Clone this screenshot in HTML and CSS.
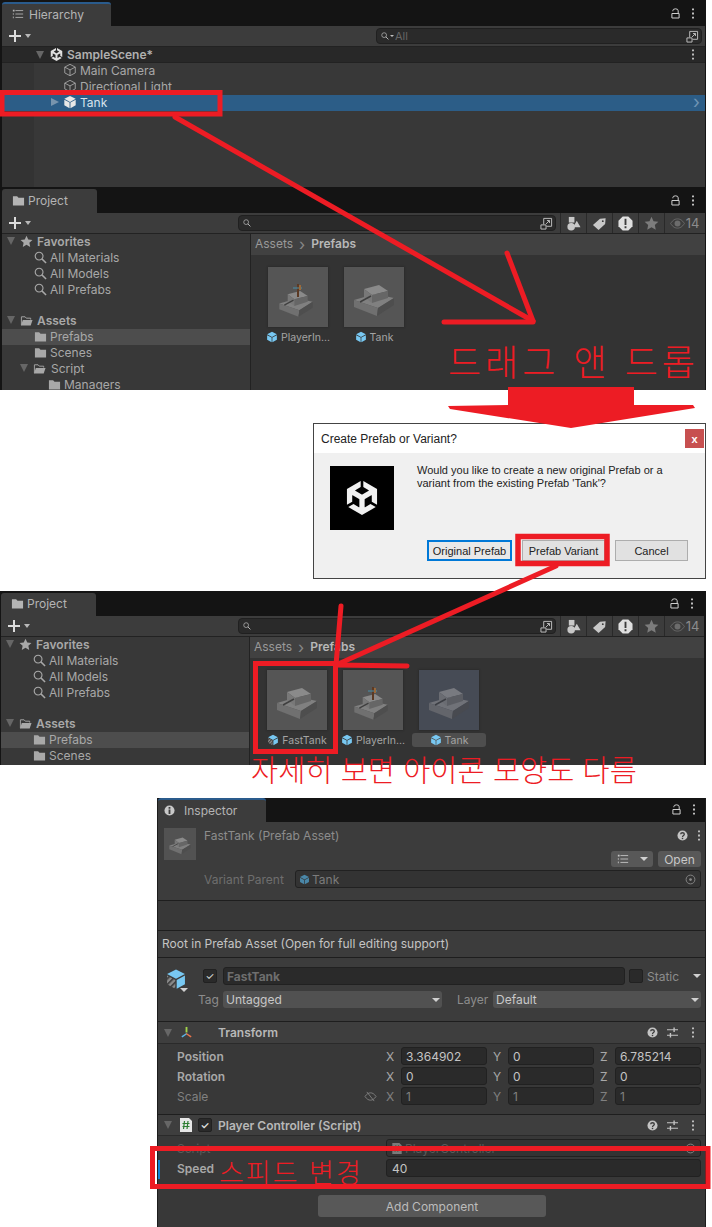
FILE: index.html
```html
<!DOCTYPE html>
<html lang="ko">
<head>
    <meta charset="UTF-8">
    <meta name="viewport" content="width=device-width, initial-scale=1.0">
    <title>Prefab Variant</title>
    <link rel="stylesheet" href="styles.css">
</head>
<body>
    <svg class="sprite" width="0" height="0">
        <defs>
            <pattern id="stripes" width="3" height="3" patternUnits="userSpaceOnUse" patternTransform="rotate(45)">
                <rect width="3" height="3" fill="#8a8a8a"/>
                <rect width="1.4" height="3" fill="#444"/>
            </pattern>
        </defs>
        <symbol id="unity" viewBox="0 0 24 24">
            <path d="m12.9288 4.2939 3.7997 2.1929c.1366.077.1415.2905 0 .3675l-4.515 2.6076a.4192.4192 0 0 1-.4246 0L7.2739 6.8543c-.1416-.0795-.1416-.2905 0-.3675l3.7972-2.193V0L1.3758 5.5977V16.793l3.7177-2.1456v-4.3858c-.0025-.1565.1727-.2676.3193-.1838l4.5176 2.6077a.4168.4168 0 0 1 .2123.3674v5.2127c.0024.1565-.1753.2675-.3194.1838l-3.7996-2.1929-3.7178 2.1457L12 24l9.6954-5.5977-3.7178-2.1457-3.7996 2.1929c-.1416.0838-.3218-.0248-.3193-.1838V13.053c0-.1565.0901-.2976.2123-.3674l4.5151-2.6077c.1442-.0838.3219.0248.3194.1838v4.3858l3.7177 2.1456V5.5977L12.9288 0Z" fill="currentColor"/>
        </symbol>
        <symbol id="plus" viewBox="0 0 12 12">
            <path d="M5 0h2v5h5v2H7v5H5V7H0V5h5z" fill="currentColor"/>
        </symbol>
        <symbol id="cube" viewBox="0 0 16 16">
            <path d="M8 1l6.5 3.4L8 7.9 1.500 4.400z M1.500 5.500l6 3.200V15l-6-3.200z M8.500 8.700l6-3.200v6.300l-6 3.200z" fill="currentColor"/>
        </symbol>
        <symbol id="cube-line" viewBox="0 0 16 16">
            <path d="M8 1.500l6 3.200v6.600l-6 3.200-6-3.200V4.700z M2 4.700l6 3.200 6-3.200 M8 7.900v6.600" fill="none" stroke="currentColor" stroke-width="1"/>
        </symbol>
        <symbol id="cube-variant" viewBox="0 0 16 16">
            <path d="M8 1l6.5 3.400L8 7.900 1.500 4.400z M8.500 8.700l6-3.200v6.300l-6 3.200z" fill="#78c8f2"/>
            <path d="M1.500 5.500l6 3.200V15l-6-3.200z" fill="url(#stripes)"/>
        </symbol>
        <symbol id="folder" viewBox="0 0 14 14">
            <path d="M1 2.500h4.500L7 4h6v8.500H1z" fill="currentColor"/>
        </symbol>
        <symbol id="folder-open" viewBox="0 0 14 14">
            <path d="M1.500 12V3h4l1.300 1.500h4.700V6" fill="none" stroke="currentColor"/>
            <path d="M3 6.500h10.500L11.500 12.500H1z" fill="currentColor"/>
        </symbol>
        <symbol id="search" viewBox="0 0 14 14">
            <circle cx="5.500" cy="5.500" r="4.200" fill="none" stroke="currentColor" stroke-width="1.200"/>
            <path d="M8.500 8.500l4.500 4.500" stroke="currentColor" stroke-width="1.600"/>
        </symbol>
        <symbol id="star" viewBox="0 0 14 14">
            <path d="M7 .8l1.900 4.100 4.500.5-3.300 3 .9 4.400L7 10.600l-4 2.200.9-4.400-3.300-3 4.500-.5z" fill="currentColor"/>
        </symbol>
        <symbol id="lock" viewBox="0 0 10 12">
            <path d="M1 6h8v5H1z M2 3.500V3a3 2.200 0 0 1 6 0v3" fill="none" stroke="currentColor" stroke-width="1.100"/>
        </symbol>
        <symbol id="dots" viewBox="0 0 4 12">
            <path d="M1 .5h2v2H1z M1 5h2v2H1z M1 9.500h2v2H1z" fill="currentColor"/>
        </symbol>
        <symbol id="list" viewBox="0 0 14 12">
            <path d="M4 2h9 M4 6h9 M4 10h9" stroke="currentColor" fill="none"/>
            <path d="M1 1h2v2H1z M1 5h1v2H1z M1 9h1v2H1z" fill="currentColor"/>
        </symbol>
        <symbol id="link" viewBox="0 0 14 14">
            <path d="M4 8V1.500h8.500V10H7 M1 8.500h5.500V13H1z M6.500 7.500L10 4 M7.500 3.800H10.200V6.500" fill="none" stroke="currentColor"/>
        </symbol>
        <symbol id="shapes" viewBox="0 0 16 16">
            <path d="M3 1h6v6H3z" fill="currentColor"/>
            <circle cx="5.500" cy="11.500" r="4" fill="currentColor"/>
            <path d="M11.500 5l4 7h-8z" fill="currentColor"/>
        </symbol>
        <symbol id="tag" viewBox="0 0 16 16">
            <path d="M1 9.500L8.500 3l6-.5-.5 6L7 15z" fill="currentColor"/>
            <circle cx="11.500" cy="5.500" r="1" fill="#3c3c3c"/>
        </symbol>
        <symbol id="alert" viewBox="0 0 16 16">
            <path d="M5 .5h6L15.500 5v6L11 15.500H5L.5 11V5z" fill="currentColor"/>
            <path d="M7 3h2v6.500H7z M7 11h2v2H7z" fill="#3c3c3c"/>
        </symbol>
        <symbol id="eye" viewBox="0 0 16 12">
            <path d="M.5 6C3 2 5.500 1 8 1s5 1 7.500 5c-2.500 4-5 5-7.500 5S3 10 .5 6z" fill="none" stroke="currentColor"/>
            <circle cx="8" cy="6" r="3.200" fill="currentColor"/>
        </symbol>
        <symbol id="eye-off" viewBox="0 0 14 12">
            <path d="M1 6c2-3 4-4 6-4s4 1 6 4c-2 3-4 4-6 4S3 9 1 6z M3 1l8 10" fill="none" stroke="currentColor"/>
        </symbol>
        <symbol id="info" viewBox="0 0 12 12">
            <circle cx="6" cy="6" r="5.500" fill="currentColor"/>
            <path d="M5 2.300h2v1.700H5z M5 5h2v4.700H5z" fill="#3c3c3c"/>
        </symbol>
        <symbol id="help" viewBox="0 0 12 12">
            <circle cx="6" cy="6" r="5.500" fill="currentColor"/>
            <path d="M4 4.500C4 2.500 8 2.500 8 4.500 8 6 6 5.800 6 7.500" fill="none" stroke="#3c3c3c" stroke-width="1.400"/>
            <path d="M5.200 8.500h1.600V10H5.200z" fill="#3c3c3c"/>
        </symbol>
        <symbol id="sliders" viewBox="0 0 12 12">
            <path d="M0 3h12 M0 9h12" stroke="currentColor" stroke-width="1.300"/>
            <path d="M7 .5h1.500v5H7z M3 6.500h1.500v5H3z" fill="currentColor"/>
        </symbol>
        <symbol id="target" viewBox="0 0 12 12">
            <circle cx="6" cy="6" r="4.800" fill="none" stroke="currentColor"/>
            <circle cx="6" cy="6" r="1.500" fill="currentColor"/>
        </symbol>
        <symbol id="axes" viewBox="0 0 14 14">
            <path d="M6 1h2v6H6z" fill="#a3d44b"/>
            <path d="M7 7.500L1.500 11l1 1.500L7.500 9z" fill="#5ab4e6"/>
            <path d="M7 7.500l5.500 3.500-1 1.500L6.500 9z" fill="#e8734a"/>
        </symbol>
        <symbol id="script" viewBox="0 0 12 14">
            <path d="M0 0h9l3 3v11H0z" fill="#e6e6e6"/>
            <path d="M4.500 3L3.500 11 M8 3L7 11 M2.500 5.500h7 M2.500 8.500h7" stroke="#2e7d32" stroke-width="1.200"/>
        </symbol>
        <symbol id="tank" viewBox="0 0 60 60">
            <path d="M10 33l21-6 19 4-16 10z" fill="#808080"/>
            <path d="M10 33l24 8-1 8-23-9z" fill="#707070"/>
            <path d="M34 41l16-10v7L33 49z" fill="#4e4e4e"/>
            <path d="M20 22l15-4 9 6-16 4z" fill="#8a8a8a"/>
            <path d="M20 22l8 6v8l-8-6z" fill="#787878"/>
            <path d="M28 28l16-4v7l-16 5z" fill="#666"/>
            <path d="M16 35l11-6" stroke="#3f3f3f" stroke-width="1.500"/>
        </symbol>
        <symbol id="tank-player" viewBox="0 0 60 60">
            <use href="#tank" x="3" y="9" width="50" height="50"/>
            <path d="M30 17v13" stroke="#5c3a24" stroke-width="2"/>
            <path d="M25 21h9" stroke="#4a8fa8" stroke-width="1"/>
            <path d="M31 18h2v5h-2z" fill="#9a6a3c"/>
        </symbol>
    </svg>

    <div class="shot shot-top">
        <section class="panel panel-hierarchy">
            <div class="tabbar">
                <div class="tab tab-focus"><svg class="ico-12"><use href="#list"/></svg>Hierarchy</div>
                <div class="tabbar-tools">
                    <svg class="ico-lock"><use href="#lock"/></svg>
                    <svg class="ico-dots"><use href="#dots"/></svg>
                </div>
            </div>
            <div class="toolbar">
                <svg class="plus"><use href="#plus"/></svg><span class="caret"></span>
                <div class="search search-wide">
                    <svg class="ico-8"><use href="#search"/></svg><span class="caret-mini"></span>
                    <span class="search-text">All</span>
                    <svg class="ico-link"><use href="#link"/></svg>
                </div>
            </div>
            <div class="scene-row">
                <span class="arrow-down arrow-scene"></span>
                <svg class="ico-scene"><use href="#unity"/></svg>
                <span class="bold">SampleScene*</span>
                <svg class="ico-dots ico-dots-end"><use href="#dots"/></svg>
            </div>
            <div class="tree">
                <div class="tree-row"><svg class="ico-cube"><use href="#cube-line"/></svg>Main Camera</div>
                <div class="tree-row"><svg class="ico-cube"><use href="#cube-line"/></svg>Directional Light</div>
                <div class="tree-row tree-row-active">
                    <span class="arrow-right"></span>
                    <svg class="ico-cube ico-white"><use href="#cube"/></svg>Tank
                    <span class="row-chevron">&#8250;</span>
                </div>
            </div>
        </section>

        <section class="panel panel-project">
            <div class="tabbar tabbar-project">
                <div class="tab"><svg class="ico-13"><use href="#folder"/></svg>Project</div>
                <div class="tabbar-tools">
                    <svg class="ico-lock"><use href="#lock"/></svg>
                    <svg class="ico-dots"><use href="#dots"/></svg>
                </div>
            </div>
            <div class="toolbar">
                <svg class="plus"><use href="#plus"/></svg><span class="caret"></span>
                <div class="search search-project">
                    <svg class="ico-8"><use href="#search"/></svg>
                    <svg class="ico-link"><use href="#link"/></svg>
                </div>
                <div class="filter"><svg class="ico-filter"><use href="#shapes"/></svg></div>
                <div class="filter"><svg class="ico-filter"><use href="#tag"/></svg></div>
                <div class="filter"><svg class="ico-filter ico-bright"><use href="#alert"/></svg></div>
                <div class="filter"><svg class="ico-filter ico-dim"><use href="#star"/></svg></div>
                <div class="filter filter-count"><svg class="ico-eye"><use href="#eye"/></svg>14</div>
            </div>
            <div class="browser">
                <div class="sidebar">
                    <div class="side-row side-root"><span class="arrow-down"></span><svg class="ico-13"><use href="#star"/></svg><span class="bold">Favorites</span></div>
                    <div class="side-row side-child"><svg class="ico-13"><use href="#search"/></svg>All Materials</div>
                    <div class="side-row side-child"><svg class="ico-13"><use href="#search"/></svg>All Models</div>
                    <div class="side-row side-child"><svg class="ico-13"><use href="#search"/></svg>All Prefabs</div>
                    <div class="side-gap"></div>
                    <div class="side-row side-root"><span class="arrow-down"></span><svg class="ico-13"><use href="#folder-open"/></svg><span class="bold">Assets</span></div>
                    <div class="side-row side-child side-active"><svg class="ico-13"><use href="#folder"/></svg>Prefabs</div>
                    <div class="side-row side-child"><svg class="ico-13"><use href="#folder"/></svg>Scenes</div>
                    <div class="side-row side-branch"><span class="arrow-down"></span><svg class="ico-13"><use href="#folder-open"/></svg>Script</div>
                    <div class="side-row side-leaf"><svg class="ico-13"><use href="#folder"/></svg>Managers</div>
                </div>
                <div class="assets">
                    <div class="crumbs">Assets<span class="crumb-sep">&#8250;</span><span class="bold">Prefabs</span></div>
                    <div class="tiles">
                        <div class="tile">
                            <div class="tile-thumb"><svg class="tile-art"><use href="#tank-player"/></svg></div>
                            <div class="tile-label"><svg class="ico-12 ico-blue"><use href="#cube"/></svg>PlayerIn...</div>
                        </div>
                        <div class="tile">
                            <div class="tile-thumb"><svg class="tile-art"><use href="#tank"/></svg></div>
                            <div class="tile-label"><svg class="ico-12 ico-blue"><use href="#cube"/></svg>Tank</div>
                        </div>
                    </div>
                </div>
            </div>
        </section>
    </div>

    <div class="dialog">
        <div class="dialog-title">
            <span>Create Prefab or Variant?</span>
            <span class="dialog-close">x</span>
        </div>
        <div class="dialog-body">
            <div class="dialog-main">
                <div class="dialog-logo"><svg class="logo-art"><use href="#unity"/></svg></div>
                <p class="dialog-text">Would you like to create a new original Prefab or a<br>variant from the existing Prefab 'Tank'?</p>
            </div>
            <div class="dialog-buttons">
                <button class="win-btn win-btn-default">Original Prefab</button>
                <button class="win-btn">Prefab Variant</button>
                <button class="win-btn win-btn-cancel">Cancel</button>
            </div>
        </div>
    </div>

    <div class="shot shot-mid">
        <section class="panel panel-project panel-project-mid">
            <div class="tabbar tabbar-project">
                <div class="tab"><svg class="ico-13"><use href="#folder"/></svg>Project</div>
                <div class="tabbar-tools">
                    <svg class="ico-lock"><use href="#lock"/></svg>
                    <svg class="ico-dots"><use href="#dots"/></svg>
                </div>
            </div>
            <div class="toolbar">
                <svg class="plus"><use href="#plus"/></svg><span class="caret"></span>
                <div class="search search-project">
                    <svg class="ico-8"><use href="#search"/></svg>
                    <svg class="ico-link"><use href="#link"/></svg>
                </div>
                <div class="filter"><svg class="ico-filter"><use href="#shapes"/></svg></div>
                <div class="filter"><svg class="ico-filter"><use href="#tag"/></svg></div>
                <div class="filter"><svg class="ico-filter ico-bright"><use href="#alert"/></svg></div>
                <div class="filter"><svg class="ico-filter ico-dim"><use href="#star"/></svg></div>
                <div class="filter filter-count"><svg class="ico-eye"><use href="#eye"/></svg>14</div>
            </div>
            <div class="browser">
                <div class="sidebar">
                    <div class="side-row side-root"><span class="arrow-down"></span><svg class="ico-13"><use href="#star"/></svg><span class="bold">Favorites</span></div>
                    <div class="side-row side-child"><svg class="ico-13"><use href="#search"/></svg>All Materials</div>
                    <div class="side-row side-child"><svg class="ico-13"><use href="#search"/></svg>All Models</div>
                    <div class="side-row side-child"><svg class="ico-13"><use href="#search"/></svg>All Prefabs</div>
                    <div class="side-gap"></div>
                    <div class="side-row side-root"><span class="arrow-down"></span><svg class="ico-13"><use href="#folder-open"/></svg><span class="bold">Assets</span></div>
                    <div class="side-row side-child side-active"><svg class="ico-13"><use href="#folder"/></svg>Prefabs</div>
                    <div class="side-row side-child"><svg class="ico-13"><use href="#folder"/></svg>Scenes</div>
                </div>
                <div class="assets">
                    <div class="crumbs">Assets<span class="crumb-sep">&#8250;</span><span class="bold">Prefabs</span></div>
                    <div class="tiles">
                        <div class="tile">
                            <div class="tile-thumb"><svg class="tile-art"><use href="#tank"/></svg></div>
                            <div class="tile-label"><svg class="ico-12"><use href="#cube-variant"/></svg>FastTank</div>
                        </div>
                        <div class="tile">
                            <div class="tile-thumb"><svg class="tile-art"><use href="#tank-player"/></svg></div>
                            <div class="tile-label"><svg class="ico-12 ico-blue"><use href="#cube"/></svg>PlayerIn...</div>
                        </div>
                        <div class="tile tile-selected">
                            <div class="tile-thumb"><svg class="tile-art"><use href="#tank"/></svg></div>
                            <div class="tile-label"><svg class="ico-12 ico-blue"><use href="#cube"/></svg>Tank</div>
                        </div>
                    </div>
                </div>
            </div>
        </section>
    </div>

    <section class="inspector">
        <div class="tabbar tabbar-inspector">
            <div class="tab tab-focus"><svg class="ico-info"><use href="#info"/></svg>Inspector</div>
            <div class="tabbar-tools">
                <svg class="ico-lock"><use href="#lock"/></svg>
                <svg class="ico-dots"><use href="#dots"/></svg>
            </div>
        </div>

        <div class="asset-head">
            <div class="asset-top">
                <div class="asset-thumb"><svg class="asset-art"><use href="#tank"/></svg></div>
                <div class="asset-main">
                    <div class="asset-title">
                        <span>FastTank (Prefab Asset)</span>
                        <span class="head-tools">
                            <svg class="ico-help"><use href="#help"/></svg>
                            <svg class="ico-dots"><use href="#dots"/></svg>
                        </span>
                    </div>
                    <div class="asset-buttons">
                        <span class="btn btn-list"><svg class="ico-12"><use href="#list"/></svg><span class="caret caret-small"></span></span>
                        <span class="btn btn-open">Open</span>
                    </div>
                </div>
            </div>
            <div class="variant-row">
                <span class="variant-label">Variant Parent</span>
                <div class="field field-object">
                    <svg class="ico-11 ico-blue-dim"><use href="#cube"/></svg>Tank
                    <svg class="ico-target"><use href="#target"/></svg>
                </div>
            </div>
        </div>
        <div class="empty-band"></div>
        <div class="root-note">Root in Prefab Asset (Open for full editing support)</div>

        <div class="go-head">
            <div class="go-icon">
                <svg class="ico-go"><use href="#cube-variant"/></svg>
                <span class="caret caret-small caret-go"></span>
            </div>
            <div class="go-rows">
                <div class="go-row">
                    <span class="check check-on go-check">&#10003;</span>
                    <div class="field go-name">FastTank</div>
                    <span class="check"></span>
                    <span class="go-static">Static</span>
                    <span class="caret caret-small"></span>
                </div>
                <div class="go-row go-row-tags">
                    <span class="tag-label">Tag</span>
                    <div class="dropdown dropdown-tag">Untagged<span class="caret caret-small"></span></div>
                    <span class="layer-label">Layer</span>
                    <div class="dropdown dropdown-layer">Default<span class="caret caret-small"></span></div>
                </div>
            </div>
        </div>

        <div class="comp-head">
            <span class="arrow-down"></span>
            <svg class="ico-comp"><use href="#axes"/></svg>
            <span class="comp-title comp-title-transform">Transform</span>
            <span class="head-tools">
                <svg class="ico-help"><use href="#help"/></svg>
                <svg class="ico-sliders"><use href="#sliders"/></svg>
                <svg class="ico-dots"><use href="#dots"/></svg>
            </span>
        </div>
        <div class="comp-body">
            <div class="prop-row">
                <span class="prop-label bold">Position</span>
                <div class="vec">
                    <div class="axis"><span class="axis-name">X</span><div class="field">3.364902</div></div>
                    <div class="axis"><span class="axis-name">Y</span><div class="field">0</div></div>
                    <div class="axis"><span class="axis-name">Z</span><div class="field">6.785214</div></div>
                </div>
            </div>
            <div class="prop-row">
                <span class="prop-label bold">Rotation</span>
                <div class="vec">
                    <div class="axis"><span class="axis-name">X</span><div class="field">0</div></div>
                    <div class="axis"><span class="axis-name">Y</span><div class="field">0</div></div>
                    <div class="axis"><span class="axis-name">Z</span><div class="field">0</div></div>
                </div>
            </div>
            <div class="prop-row prop-dim">
                <span class="prop-label">Scale<svg class="ico-eyeoff"><use href="#eye-off"/></svg></span>
                <div class="vec">
                    <div class="axis"><span class="axis-name">X</span><div class="field">1</div></div>
                    <div class="axis"><span class="axis-name">Y</span><div class="field">1</div></div>
                    <div class="axis"><span class="axis-name">Z</span><div class="field">1</div></div>
                </div>
            </div>
        </div>

        <div class="comp-head comp-head-script">
            <span class="arrow-down"></span>
            <svg class="ico-script"><use href="#script"/></svg>
            <span class="check check-on comp-check">&#10003;</span>
            <span class="comp-title">Player Controller (Script)</span>
            <span class="head-tools">
                <svg class="ico-help"><use href="#help"/></svg>
                <svg class="ico-sliders"><use href="#sliders"/></svg>
                <svg class="ico-dots"><use href="#dots"/></svg>
            </span>
        </div>
        <div class="comp-body comp-body-script">
            <div class="prop-row prop-faint">
                <span class="prop-label">Script</span>
                <div class="field field-wide field-faint">
                    <svg class="ico-10"><use href="#script"/></svg>PlayerController
                    <svg class="ico-target"><use href="#target"/></svg>
                </div>
            </div>
            <div class="prop-row prop-override">
                <span class="prop-label bold">Speed</span>
                <div class="field field-wide">40</div>
            </div>
        </div>
        <div class="add-wrap"><span class="btn btn-add">Add Component</span></div>
    </section>

    <!-- hand drawn markup on top of the screenshots -->
    <svg class="markup" viewBox="0 0 712 1227" width="712" height="1227">
        <g fill="none" stroke="#ed1c24" stroke-width="5" stroke-linecap="round">
            <rect x="2" y="92.500" width="218" height="21.500" stroke-linecap="butt"/>
            <path d="M175 117L533 321"/>
            <path d="M507 253L533 321"/>
            <path d="M444 322L533 322"/>
            <rect x="518" y="536.500" width="89" height="27" stroke-linecap="butt" stroke-width="5.500"/>
            <path d="M556 566L336 665"/>
            <path d="M341 606L336 665"/>
            <path d="M336 665L407 666"/>
            <rect x="255.500" y="663.500" width="80" height="88" stroke-linecap="butt"/>
            <rect x="152.500" y="1148.500" width="555.500" height="38" stroke-linecap="butt"/>
        </g>
        <path d="M508 387H634V405H693L695 408 571 428 450 409 448 406 508 405z" fill="#ed1c24"/>
    </svg>
    <span class="note note-drag">드래그 앤 드롭</span>
    <span class="note note-icon">자세히 보면 아이콘 모양도 다름</span>
    <span class="note note-speed">스피드 변경</span>
</body>
</html>
```

FILE: styles.css
```css
* {
    box-sizing: border-box;
}
body {
    position: relative;
    width: 712px;
    height: 1227px;
    margin: 0;
    overflow: hidden;
    background: #fff;
    font-family: Inter, "Noto Sans", sans-serif;
    font-size: 12px;
    color: #b0b0b0;
}
svg {
    display: block;
    flex: none;
}
.sprite {
    height: 0;
}
.bold {
    font-weight: 600;
}

/* screenshot blocks */
.shot {
    width: 706px;
    background: #141414;
    overflow: hidden;
}
.shot-top {
    height: 390px;
    padding: 0 1px 0 2px;
}
.shot-mid {
    height: 174px;
    margin-top: 12px;
    padding: 0 2px 0 1px;
}
.panel-hierarchy {
    height: 187px;
}
.panel-project {
    height: 203px;
}
.panel-project-mid {
    height: 174px;
}
.panel-project-mid .tabbar {
    height: 25px;
}
.panel-project-mid .search-project {
    margin-left: 208px;
}

/* tabs */
.tabbar {
    display: flex;
    justify-content: space-between;
    height: 26px;
    padding-top: 2px;
    background: #141414;
}
.tabbar-inspector {
    height: 24px;
    padding: 0;
}
.tab {
    display: flex;
    align-items: center;
    gap: 5px;
    width: 109px;
    padding: 0 0 2px 10px;
    background: #3c3c3c;
    border-radius: 3px 3px 0 0;
    color: #b4b4b4;
}
.tab-focus {
    border-top: 2px solid #2a5b8c;
}
.tabbar-project .tab {
    width: 95px;
    gap: 3px;
}
.tabbar-inspector .tab {
    width: 108px;
    gap: 9px;
    padding-left: 6px;
}
.tabbar-tools {
    display: flex;
    align-items: center;
    gap: 11px;
    padding: 0 10px 2px 0;
    color: #d0d0d0;
}
.tabbar-inspector .tabbar-tools {
    padding-right: 9px;
}

/* icons */
.ico-8 {
    width: 8px;
    height: 8px;
    color: #c0c0c0;
}
.ico-10 {
    width: 10px;
    height: 11px;
    margin-right: 3px;
    opacity: .4;
}
.ico-11 {
    width: 11px;
    height: 11px;
    margin-right: 2px;
}
.ico-12 {
    width: 12px;
    height: 12px;
}
.ico-13 {
    width: 13px;
    height: 13px;
}
.ico-lock {
    width: 9px;
    height: 11px;
}
.ico-dots {
    width: 4px;
    height: 11px;
}
.ico-blue {
    color: #78c8f2;
}
.ico-blue-dim {
    color: #4a87a8;
}
.ico-white {
    color: #e8e8e8;
}
.ico-link {
    width: 13px;
    height: 13px;
    margin-left: auto;
    color: #c4c4c4;
}
.ico-cube {
    width: 14px;
    height: 14px;
    margin-right: 3px;
}
.ico-scene {
    width: 13px;
    height: 13px;
    margin-right: 4px;
    color: #e0e0e0;
}
.ico-filter {
    width: 15px;
    height: 15px;
    color: #c8c8c8;
}
.ico-bright {
    color: #e0e0e0;
}
.ico-dim {
    color: #7c7c7c;
}
.ico-eye {
    width: 15px;
    height: 11px;
    color: #6c6c6c;
}
.ico-info {
    width: 11px;
    height: 11px;
    color: #c8c8c8;
}
.ico-help {
    width: 11px;
    height: 11px;
    color: #c4c4c4;
}
.ico-sliders {
    width: 11px;
    height: 11px;
    margin-right: 4px;
    color: #c4c4c4;
}
.ico-target {
    width: 11px;
    height: 11px;
    margin-left: auto;
    color: #8a8a8a;
}
.ico-go {
    width: 22px;
    height: 22px;
}
.ico-comp {
    width: 13px;
    height: 13px;
}
.ico-script {
    width: 12px;
    height: 14px;
}
.ico-eyeoff {
    width: 13px;
    height: 11px;
    margin-right: 9px;
}

/* arrows and carets */
.caret {
    display: block;
    flex: none;
    width: 0;
    height: 0;
    border-left: 4px solid transparent;
    border-right: 4px solid transparent;
    border-top: 5px solid #b8b8b8;
}
.caret-small {
    border-left-width: 4px;
    border-right-width: 4px;
    border-top-width: 4px;
    border-top-color: #d0d0d0;
}
.caret-mini {
    width: 0;
    height: 0;
    border-left: 2px solid transparent;
    border-right: 2px solid transparent;
    border-top: 2px solid #c0c0c0;
}
.arrow-down {
    flex: none;
    width: 0;
    height: 0;
    border-left: 4px solid transparent;
    border-right: 4px solid transparent;
    border-top: 8px solid #666;
}
.arrow-right {
    flex: none;
    width: 0;
    height: 0;
    margin-right: 4px;
    border-top: 4px solid transparent;
    border-bottom: 4px solid transparent;
    border-left: 8px solid #7894ad;
}

/* toolbars */
.toolbar {
    display: flex;
    align-items: center;
    height: 20px;
    padding-left: 7px;
    background: #3c3c3c;
}
.plus {
    width: 12px;
    height: 12px;
    margin-right: 4px;
    color: #dcdcdc;
}
.toolbar .caret {
    border-left-width: 3.500px;
    border-right-width: 3.500px;
    border-top-width: 4px;
}
.search {
    display: flex;
    align-items: center;
    gap: 1px;
    height: 16px;
    padding: 0 2px 0 4px;
    background: #2a2a2a;
    border: 1px solid #202020;
    border-radius: 4px;
}
.search-wide {
    width: 326px;
    margin-left: auto;
    margin-right: 3px;
}
.search-text {
    font-size: 11px;
    color: #666;
}
.search-project {
    width: 318px;
    margin-left: 207px;
    margin-right: 4px;
}
.filter {
    display: flex;
    align-items: center;
    justify-content: center;
    width: 26px;
    height: 20px;
    border-left: 1px solid #292929;
}
.filter-count {
    width: 40px;
    gap: 1px;
    color: #8c8c8c;
    font-size: 13px;
}

/* hierarchy */
.scene-row {
    display: flex;
    align-items: center;
    height: 17px;
    padding: 0 10px 0 34px;
    background: #282828;
    border-top: 1px solid #222;
    border-bottom: 1px solid #222;
}
.arrow-scene {
    margin-right: 6px;
}
.ico-dots-end {
    margin-left: auto;
    color: #c8c8c8;
}
.tree {
    height: 124px;
    background: linear-gradient(90deg, #333 32px, #383838 32px);
}
.tree-row {
    display: flex;
    align-items: center;
    height: 16px;
    padding: 0 0 2px 61px;
    color: #a8a8a8;
}
.tree-row-active {
    padding-left: 49px;
    background: #2c5d87;
    color: #d8e4ee;
}
.row-chevron {
    margin-left: auto;
    padding-right: 5px;
    font-size: 18px;
    line-height: 14px;
    color: #6f94b4;
}

/* project browser */
.browser {
    display: flex;
    height: 157px;
    border-top: 1px solid #222;
    overflow: hidden;
}
.sidebar {
    flex: none;
    width: 249px;
    background: #383838;
    border-right: 1px solid #222;
}
.side-row {
    display: flex;
    align-items: center;
    gap: 3px;
    height: 16px;
    padding-bottom: 2px;
    color: #a8a8a8;
}
.side-root {
    gap: 4px;
    padding-left: 5px;
}
.side-root .arrow-down {
    margin-right: 1px;
}
.side-child {
    padding-left: 32px;
}
.side-active {
    background: #4d4d4d;
}
.side-branch {
    padding-left: 18px;
    gap: 5px;
}
.side-leaf {
    padding-left: 46px;
}
.side-gap {
    height: 15px;
}
.assets {
    flex: 1;
    background: #333;
}
.crumbs {
    display: flex;
    align-items: center;
    height: 21px;
    padding: 0 0 2px 4px;
    background: #414141;
    color: #999;
}
.crumb-sep {
    margin: 0 6px;
    font-size: 16px;
    line-height: 14px;
    color: #888;
}
.crumbs .bold {
    color: #b8b8b8;
}
.tiles {
    display: flex;
    gap: 16px;
    padding: 12px 0 0 17px;
}
.tile {
    width: 60px;
}
.tile-thumb {
    position: relative;
    width: 60px;
    height: 60px;
    background: #555;
    box-shadow: 0 0 2px #222;
}
.tile-art {
    width: 60px;
    height: 60px;
}
.tile-label {
    display: flex;
    align-items: center;
    justify-content: center;
    gap: 3px;
    margin: 3px -7px 0;
    height: 14px;
    border-radius: 3px;
    font-size: 10.5px;
    white-space: nowrap;
    color: #a4a4a4;
}
.tile-selected .tile-thumb {
    background: #4c4f54;
}
.tile-selected .tile-thumb::after {
    content: "";
    position: absolute;
    inset: 0;
    background: rgba(50, 60, 90, .2);
}
.tile-selected .tile-label {
    background: #4e4e4e;
}

/* windows dialog */
.dialog {
    width: 393px;
    height: 156px;
    margin: 33px 0 0 313px;
    background: #f0f0f0;
    border: 1px solid #444;
    font-family: "Liberation Sans", sans-serif;
    color: #222;
}
.dialog-title {
    display: flex;
    align-items: center;
    justify-content: space-between;
    height: 29px;
    padding: 0 1px 0 7px;
    background: #fff;
    font-size: 12px;
}
.dialog-close {
    display: flex;
    align-items: center;
    justify-content: center;
    width: 19px;
    height: 19px;
    background: #c75050;
    color: #fff;
    font-size: 11px;
    font-weight: 700;
}
.dialog-body {
    padding: 13px 17px 0 16px;
}
.dialog-main {
    display: flex;
    height: 74px;
}
.dialog-logo {
    display: flex;
    align-items: center;
    justify-content: center;
    width: 64px;
    height: 64px;
    background: #000;
}
.logo-art {
    width: 34px;
    height: 36px;
    color: #f0f0f0;
}
.dialog-text {
    margin: -2px 0 0 23px;
    font-size: 11px;
    line-height: 13px;
}
.dialog-buttons {
    display: flex;
    justify-content: flex-end;
    gap: 10px;
}
.win-btn {
    width: 83px;
    height: 21px;
    padding: 0;
    background: #e1e1e1;
    border: 1px solid #adadad;
    border-radius: 0;
    font-family: "Liberation Sans", sans-serif;
    font-size: 11px;
    color: #222;
}
.win-btn-default {
    width: 85px;
    background: #e8e8e8;
    border: 2px solid #0078d7;
}
.win-btn-cancel {
    width: 73px;
}

/* inspector */
.inspector {
    width: 549px;
    height: 429px;
    margin: 33px 0 0 157px;
    background: #383838;
    border-left: 1px solid #1c1c1c;
    border-right: 1px solid #1c1c1c;
    overflow: hidden;
}
.asset-head {
    height: 79px;
    padding: 6px 4px 0 6px;
    background: #3c3c3c;
    border-bottom: 1px solid #1e1e1e;
    color: #8c8c8c;
}
.asset-top {
    display: flex;
    height: 42px;
}
.asset-thumb {
    width: 32px;
    height: 32px;
    background: #525252;
}
.asset-art {
    width: 32px;
    height: 32px;
}
.asset-main {
    flex: 1;
    margin-left: 8px;
}
.asset-title {
    display: flex;
    justify-content: space-between;
    align-items: center;
    height: 14px;
}
.head-tools {
    display: flex;
    align-items: center;
    gap: 9px;
    color: #c8c8c8;
}
.asset-buttons {
    display: flex;
    justify-content: flex-end;
    gap: 5px;
    margin-top: 9px;
}
.btn {
    display: flex;
    align-items: center;
    justify-content: center;
    height: 16px;
    background: #585858;
    border-radius: 3px;
    color: #c8c8c8;
}
.btn-list {
    gap: 11px;
    width: 42px;
}
.btn-open {
    width: 43px;
}
.variant-row {
    display: flex;
    align-items: center;
    height: 18px;
    padding-left: 40px;
}
.variant-label {
    width: 91px;
    color: #6e6e6e;
}
.field {
    display: flex;
    align-items: center;
    flex: 1;
    height: 18px;
    padding: 0 4px;
    background: #2a2a2a;
    border: 1px solid #212121;
    border-radius: 3px;
    color: #c4c4c4;
    white-space: nowrap;
    overflow: hidden;
}
.field-object {
    padding-left: 3px;
    color: #7c7c7c;
    background: #333;
}
.empty-band {
    height: 30px;
    border-bottom: 1px solid #1e1e1e;
}
.root-note {
    display: flex;
    align-items: center;
    height: 27px;
    padding: 0 0 2px 4px;
    background: #3c3c3c;
    border-bottom: 1px solid #1e1e1e;
    color: #c4c4c4;
}
.go-head {
    display: flex;
    height: 63px;
    padding: 9px 4px 0 7px;
    background: #3c3c3c;
}
.go-icon {
    position: relative;
    width: 33px;
    padding-top: 1px;
}
.caret-go {
    position: absolute;
    left: 15px;
    top: 21px;
}
.go-rows {
    flex: 1;
}
.go-row {
    display: flex;
    align-items: center;
    height: 18px;
}
.go-row-tags {
    align-items: flex-start;
    margin-top: 6px;
    line-height: 17px;
}
.check {
    display: flex;
    align-items: center;
    justify-content: center;
    flex: none;
    width: 14px;
    height: 14px;
    margin-left: 4px;
    background: #2a2a2a;
    border: 1px solid #212121;
    border-radius: 2px;
    font-size: 10px;
    line-height: 1;
    color: #e4e4e4;
}
.go-check {
    margin-left: 5px;
    margin-right: 6px;
}
.go-name {
    font-weight: 700;
    color: #6e6e6e;
    padding-left: 3px;
}
.go-static {
    width: 46px;
    margin-left: 4px;
    color: #8c8c8c;
}
.tag-label {
    width: 25px;
    color: #8c8c8c;
}
.layer-label {
    width: 36px;
    margin-left: 15px;
    color: #8c8c8c;
}
.dropdown {
    display: flex;
    align-items: center;
    justify-content: space-between;
    height: 17px;
    padding: 0 2px 0 3px;
    background: #515151;
    border-radius: 3px;
    color: #c8c8c8;
}
.dropdown-tag {
    width: 219px;
}
.dropdown-layer {
    flex: 1;
}
.comp-head {
    display: flex;
    align-items: center;
    height: 22px;
    padding: 0 10px 0 6px;
    background: #3e3e3e;
    border-top: 1px solid #1e1e1e;
    color: #b8b8b8;
    font-weight: 600;
}
.comp-head .ico-comp {
    margin-left: 8px;
}
.comp-title-transform {
    margin-left: 25px;
}
.comp-head .head-tools {
    margin-left: auto;
}
.comp-head-script {
    height: 22px;
    border-bottom: 1px solid #2a2a2a;
}
.comp-head-script .ico-script {
    margin-left: 8px;
}
.comp-check {
    margin: 0 6px 0 6px;
}
.comp-body {
    height: 71px;
    padding: 3px 4px 0 19px;
    border-top: 1px solid #2a2a2a;
}
.comp-body-script {
    height: 59px;
    padding-top: 3px;
    border-top: 0;
}
.prop-row {
    display: flex;
    align-items: center;
    height: 18px;
    margin-bottom: 2px;
}
.prop-label {
    display: flex;
    align-items: center;
    justify-content: space-between;
    flex: none;
    width: 209px;
    color: #a8a8a8;
}
.prop-dim .prop-label,
.prop-dim .axis-name,
.prop-dim .field {
    color: #808080;
}
.prop-faint .prop-label {
    color: #5a5a5a;
}
.field-faint {
    background: #333;
    color: #5a5a5a;
}
.field-wide {
    padding-left: 5px;
}
.prop-override {
    position: relative;
}
.prop-override::before {
    content: "";
    position: absolute;
    left: -19px;
    top: 1px;
    width: 2px;
    height: 19px;
    background: #0f81d6;
}
.vec {
    display: grid;
    grid-template-columns: repeat(3, 1fr);
    column-gap: 6px;
    width: 315px;
}
.axis {
    display: flex;
    align-items: center;
}
.axis-name {
    width: 15px;
    color: #a8a8a8;
}
.add-wrap {
    display: flex;
    padding: 0 0 0 160px;
}
.btn-add {
    width: 228px;
    height: 22px;
    background: #585858;
    color: #bcbcbc;
}

/* markup over the screenshots */
.markup {
    position: absolute;
    left: 0;
    top: 0;
}
.note {
    position: absolute;
    font-family: "Noto Sans CJK KR", sans-serif;
    font-weight: 300;
    line-height: 1;
    white-space: nowrap;
    color: #ed1c24;
}
.note-drag {
    left: 448px;
    top: 342px;
    font-size: 36px;
    letter-spacing: 4px;
}
.note-icon {
    left: 251px;
    top: 754px;
    font-size: 29.5px;
}
.note-speed {
    left: 219px;
    top: 1158px;
    font-size: 27px;
    letter-spacing: 2px;
}
```
